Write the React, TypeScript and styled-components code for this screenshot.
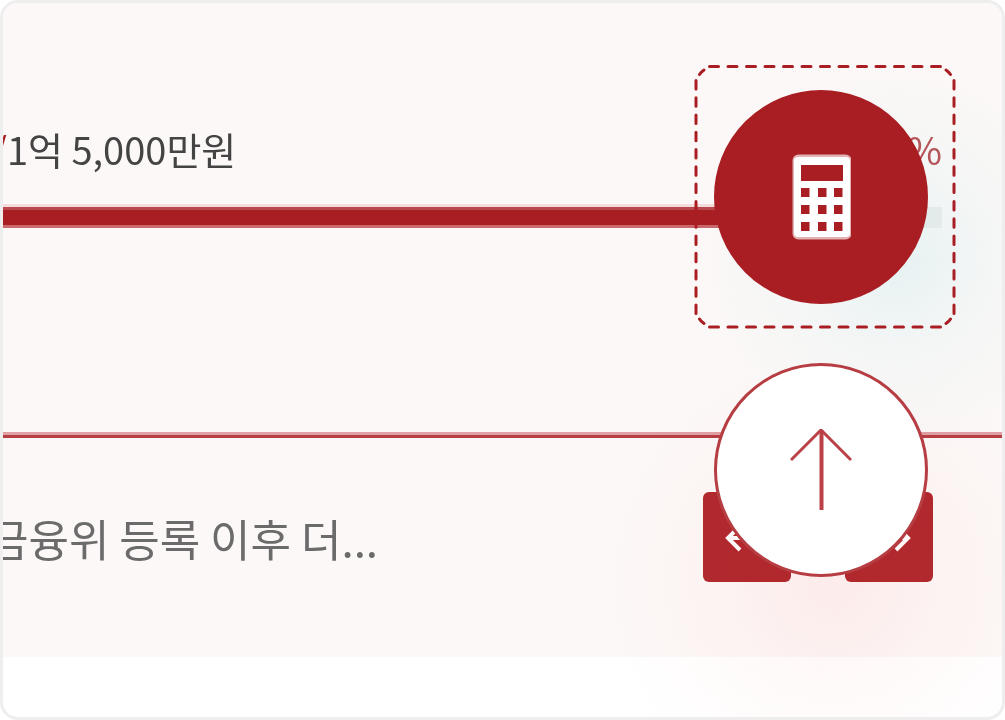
import React from "react";
import styled, { createGlobalStyle } from "styled-components";

const red = "#a91e23";

const GlobalStyle = createGlobalStyle`
  * { box-sizing: border-box; }
  body { margin: 0; background: #fff; }
  body, button { font-family: "Noto Sans CJK KR", "Noto Sans", sans-serif; }
`;

const Frame = styled.main`
  position: relative;
  display: flex;
  flex-direction: column;
  min-height: 100vh;
  overflow: hidden;
  border: 3px solid #eee;
  border-radius: 18px;
  background: #fff;
`;

const Glow = styled.div`
  position: absolute;
  inset: 0;
  pointer-events: none;
  mix-blend-mode: multiply;
  background:
    radial-gradient(circle at calc(100% - 108px) 255px, rgba(232, 248, 250, 0.95), rgba(241, 251, 252, 0.6) 90px, rgba(255, 255, 255, 0) 200px),
    radial-gradient(circle at calc(100% - 168px) 580px, rgba(255, 242, 242, 0.95), rgba(255, 248, 248, 0.7) 110px, rgba(255, 255, 255, 0) 230px);
`;

const Funding = styled.section`
  height: 429px;
  padding: 118px 60px 0 0;
  background: #fcf8f7;
`;

const Amounts = styled.div`
  display: flex;
  justify-content: space-between;
  font-size: 38px;
  line-height: 56px;
  white-space: nowrap;
`;

const Goal = styled.p`
  margin: 0 0 0 -11px;
  color: #444;
`;

const Slash = styled.span`
  color: ${red};
`;

const Percent = styled.span`
  color: #bb5458;
`;

const Track = styled.div`
  height: 21px;
  margin-top: 30px;
  background: #f0eeed;
`;

const Fill = styled.div`
  width: 96%;
  height: 100%;
  border-top: 3px solid #b9484c;
  border-bottom: 3px solid #c9696c;
  box-shadow: 0 -3px #f3dddc;
  background: ${red};
`;

const News = styled.section`
  display: flex;
  justify-content: space-between;
  align-items: flex-start;
  height: 225px;
  padding: 57px 69px 0 0;
  border-top: 3px solid #e0a0a3;
  box-shadow: inset 0 3px #b73f44;
  background: #fcf8f7;
`;

const Headline = styled.a`
  margin: 13px 0 0 -15px;
  color: #6b6b6b;
  font-size: 44px;
  line-height: 66px;
  text-decoration: none;
  white-space: nowrap;
`;

const Pager = styled.div`
  display: flex;
  gap: 54px;
`;

const PageButton = styled.button`
  width: 88px;
  height: 90px;
  padding: 0;
  border: 0;
  border-radius: 6px;
  background: #b1292e;

  svg {
    display: block;
  }
`;

const FloatingTools = styled.aside`
  position: absolute;
  top: 62px;
  right: 46px;
  display: flex;
  flex-direction: column;
  gap: 35px;
  width: 262px;
`;

const Highlight = styled.div`
  position: relative;
  height: 263px;
  padding-top: 25px;
`;

const Outline = styled.svg`
  position: absolute;
  inset: 0;
  overflow: visible;
  pointer-events: none;
`;

const RoundButton = styled.button<{ $filled?: boolean }>`
  display: block;
  width: 214px;
  height: 214px;
  margin: 0 0 0 20px;
  padding: 0;
  border: 3px solid ${(p) => (p.$filled ? red : "#b63d42")};
  border-radius: 50%;
  background: ${(p) => (p.$filled ? red : "#fff")};

  svg {
    display: block;
    margin: auto;
  }
`;

export default function App() {
  return (
    <>
      <GlobalStyle />
      <Frame>
        <Funding>
          <Amounts>
            <Goal><Slash>/</Slash>1억 5,000만원</Goal>
            <Percent>96%</Percent>
          </Amounts>
          <Track><Fill /></Track>
        </Funding>
        <News>
          <Headline href="#">금융위 등록 이후 더...</Headline>
          <Pager>
            <PageButton aria-label="이전">
              <svg width="88" height="90" fill="none" stroke="#fff" strokeWidth="4">
                <path d="M37 34 25 46l12 12M25 46h38" />
              </svg>
            </PageButton>
            <PageButton aria-label="다음">
              <svg width="88" height="90" fill="none" stroke="#fff" strokeWidth="4">
                <path d="M51 34l12 12-12 12M63 46H25" />
              </svg>
            </PageButton>
          </Pager>
        </News>
        <Glow />
        <FloatingTools>
          <Highlight>
            <RoundButton $filled aria-label="계산기">
              <svg width="60" height="86" viewBox="0 0 60 86">
                <rect x="1.5" y="0.5" width="59" height="85" rx="6" fill="#e3b2b4" />
                <rect x="3" y="3" width="56" height="80" rx="4" fill="#fff" />
                <rect x="10" y="11" width="42" height="16" fill={red} />
                {[34, 51, 68].map((y) => [10, 27, 43].map((x) => (
                  <rect key={`${x}-${y}`} x={x} y={y} width="8.5" height="9" fill={red} />
                )))}
              </svg>
            </RoundButton>
            <Outline width="262" height="263" fill="none" stroke={red} strokeWidth="3" strokeLinecap="round">
              <path d="M15.5 1.5h231M15.5 262h231" strokeDasharray="9 9.5" />
              <path d="M2 15.500v233M260 15.500v233" strokeDasharray="8.5 8.77" />
              <path d="M5.500 9.500Q7 7 10 5M252 5q3 2 4.500 4.500M5.500 254q1.500 2.500 4.500 4.500M252 258.500q3-2 4.500-4.500" />
            </Outline>
          </Highlight>
          <RoundButton aria-label="맨 위로">
            <svg width="62" height="82" viewBox="0 0 62 82" fill="none" stroke="#b94147" strokeWidth="3">
              <path d="M1 31 31 1l30 30" />
              <path d="M31.500 1v80" strokeWidth="4" />
            </svg>
          </RoundButton>
        </FloatingTools>
      </Frame>
    </>
  );
}
